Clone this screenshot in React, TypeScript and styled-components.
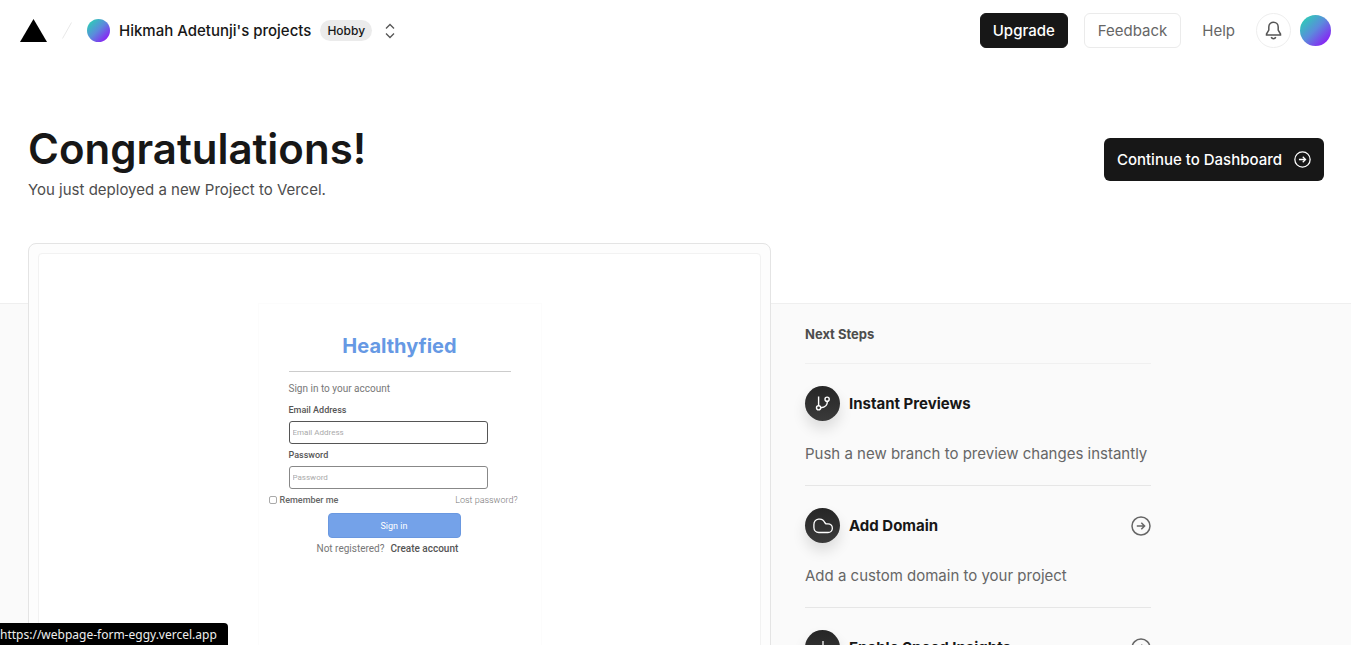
import React from "react";
import styled, { createGlobalStyle, css } from "styled-components";

const GlobalStyle = createGlobalStyle`
  *, *::before, *::after { box-sizing: border-box; }
  body {
    margin: 0;
    background: #fff;
    color: #171717;
    font-family: Inter, "Liberation Sans", sans-serif;
    font-size: 15px;
    line-height: 20px;
  }
  h1, h2, h3, p, ul { margin: 0; padding: 0; }
  a { color: inherit; text-decoration: none; }
  button, input { font: inherit; }
`;

const Page = styled.div`
  display: flex;
  flex-direction: column;
  height: 100vh;
  overflow: hidden;
`;

const Header = styled.header`
  display: flex;
  flex: none;
  align-items: center;
  justify-content: space-between;
  height: 61px;
  padding: 0 20px;
`;

const Cluster = styled.div<{ $gap: number }>`
  display: flex;
  align-items: center;
  gap: ${(p) => p.$gap}px;
`;

const HomeLink = styled.a`
  display: flex;
`;

const Avatar = styled.span<{ $size: number }>`
  flex: none;
  width: ${(p) => p.$size}px;
  height: ${(p) => p.$size}px;
  border-radius: 50%;
  background: linear-gradient(135deg, #2bd0b4 8%, #5b8bdc 48%, #8a1ff5 88%);
`;

const TeamName = styled.a`
  font-weight: 500;
`;

const Pill = styled.span`
  padding: 0 7px;
  border-radius: 11px;
  background: #ebebeb;
  font-size: 12px;
  font-weight: 500;
  line-height: 21px;
`;

const IconButton = styled.button<{ $round?: boolean }>`
  display: flex;
  align-items: center;
  justify-content: center;
  padding: 0;
  border: 0;
  background: none;
  color: #555;
  ${(p) =>
    p.$round &&
    css`
      width: 35px;
      height: 35px;
      border: 1px solid #eee;
      border-radius: 50%;
    `}
`;

const Button = styled.button<{ $dark?: boolean }>`
  height: 35px;
  padding: 0 ${(p) => (p.$dark ? 12 : 13)}px;
  border: 1px solid ${(p) => (p.$dark ? "#171717" : "#ebebeb")};
  border-radius: 6px;
  background: ${(p) => (p.$dark ? "#171717" : "#fff")};
  color: ${(p) => (p.$dark ? "#fff" : "#666")};
  font-weight: ${(p) => (p.$dark ? 500 : 400)};
`;

const HelpLink = styled.a`
  padding: 0 5px;
  color: #666;
`;

const Intro = styled.section`
  display: flex;
  flex: none;
  align-items: flex-start;
  justify-content: space-between;
  height: 242px;
  padding: 64px 27px 0 28px;
`;

const Title = styled.h1`
  font-size: 42px;
  font-weight: 600;
  line-height: 48px;
`;

const Subtitle = styled.p`
  margin-top: 7px;
  color: #4d4d4d;
`;

const ContinueLink = styled.a`
  display: flex;
  align-items: center;
  gap: 12px;
  height: 43px;
  margin-top: 13px;
  padding: 0 13px;
  border-radius: 6px;
  background: #171717;
  color: #fff;
  font-weight: 500;
`;

const Band = styled.section`
  display: grid;
  flex: none;
  grid-template-columns: minmax(0, 1fr) 519px;
  gap: 34px;
  padding: 0 27px 0 28px;
  border-top: 1px solid #efefef;
  background: #fafafa;
`;

const PreviewCard = styled.div`
  margin-top: -61px;
  padding: 9px;
  border: 1px solid #e4e4e4;
  border-radius: 8px;
  background: #fdfdfd;
`;

const PreviewScreen = styled.div`
  min-height: 480px;
  padding-top: 49px;
  border: 1px solid #f2f2f2;
  border-radius: 4px;
  background: #fff;
  font-family: Roboto, sans-serif;
  font-size: 10px;
  line-height: 12px;
`;

const SignInForm = styled.form`
  width: 284px;
  min-height: 360px;
  margin: 0 auto;
  padding-top: 28px;
  border: 1px solid #fcfcfc;
  color: #777;
`;

const Brand = styled.h2`
  margin: 0 30px;
  padding-bottom: 11px;
  border-bottom: 1px solid #ccc;
  color: #6699e4;
  font-family: Inter, sans-serif;
  font-size: 20px;
  font-weight: 700;
  line-height: 28px;
  text-align: center;
`;

const Fields = styled.div`
  display: flex;
  flex-direction: column;
  padding: 11px 53px 0 30px;
`;

const FieldLabel = styled.label`
  margin-top: 9px;
  color: #555;
  font-size: 9px;
  font-weight: 500;
`;

const FieldInput = styled.input<{ $active?: boolean }>`
  height: 23px;
  margin-top: 5px;
  margin-bottom: -4px;
  padding: 0 3px;
  border: 1px solid ${(p) => (p.$active ? "#555" : "#888")};
  border-radius: 3px;
  background: #fff;
  font-size: 8px;
  &::placeholder { color: #aaa; opacity: 1; }
`;

const OptionsRow = styled.div`
  display: flex;
  align-items: center;
  justify-content: space-between;
  margin-top: 9px;
  padding: 0 23px 0 10px;
  font-size: 9px;
`;

const Remember = styled.label`
  display: flex;
  align-items: center;
  gap: 3px;
  color: #666;
  font-weight: 500;
`;

const LostLink = styled.a`
  font-weight: 300;
`;

const TickBox = styled.input`
  appearance: none;
  width: 8px;
  height: 8px;
  margin: 0;
  border: 1px solid #aaa;
  border-radius: 2px;
`;

const SubmitButton = styled.button`
  display: block;
  width: 133px;
  height: 25px;
  margin: 7px 0 5px 69px;
  padding: 0;
  border: 1px solid #6a98e0;
  border-radius: 4px;
  background: #74a2e9;
  color: #fff;
  font-size: 9px;
`;

const RegisterLine = styled.p`
  display: flex;
  gap: 6px;
  padding-left: 58px;
  a { color: #555; font-weight: 500; }
`;

const NextSteps = styled.aside`
  max-width: 346px;
  padding-top: 20px;
`;

const StepsHeading = styled.h2`
  padding-bottom: 19px;
  color: #4d4d4d;
  font-size: 13px;
  font-weight: 700;
  line-height: 20px;
`;

const StepList = styled.ul`
  list-style: none;
`;

const Step = styled.li`
  height: 122px;
  padding-top: 22px;
  border-top: 1px solid #e6e6e6;
  &:first-child { border-color: #f0f0f0; }
`;

const StepHead = styled.div`
  display: flex;
  align-items: center;
  gap: 9px;
  color: #666;
`;

const StepBadge = styled.span`
  display: flex;
  align-items: center;
  justify-content: center;
  width: 35px;
  height: 35px;
  border-radius: 50%;
  background: linear-gradient(#262626, #3a3a3a);
  box-shadow: 0 8px 14px rgba(0, 0, 0, 0.12);
  color: #fff;
`;

const StepName = styled.h3`
  flex: 1;
  color: #171717;
  font-size: 15px;
  font-weight: 700;
`;

const StepText = styled.p`
  margin-top: 23px;
  color: #666;
`;

const StepLink = styled.a`
  display: flex;
`;

const StatusBar = styled.div`
  position: fixed;
  bottom: 0;
  left: 0;
  height: 22px;
  padding-right: 11px;
  border-radius: 0 4px 0 0;
  background: #000;
  color: #eee;
  font-family: "Noto Sans", sans-serif;
  font-size: 12px;
  line-height: 24px;
`;

const CircleArrow = ({ size }: { size: number }) => (
  <svg width={size} height={size} viewBox="0 0 20 20" fill="none" stroke="currentColor" strokeWidth="1.5">
    <circle cx="10" cy="10" r="9" />
    <path d="M5.8 10h7.6M10.3 6.7l3.3 3.3-3.3 3.3" />
  </svg>
);

const BranchIcon = () => (
  <svg width="17" height="17" viewBox="0 0 17 17" fill="none" stroke="currentColor" strokeWidth="1.4">
    <path d="M4.6 1.6v9.1M13.4 6.3c0 3.9-2.4 6.2-6.6 6.5" />
    <circle cx="4.6" cy="12.8" r="2.1" />
    <circle cx="13.1" cy="4.2" r="2.1" />
  </svg>
);

const CloudIcon = () => (
  <svg width="20" height="16" viewBox="0 0 20 16" fill="none" stroke="currentColor" strokeWidth="1.3">
    <path d="M5.8 14.5a5 5 0 0 1-4.9-5V6.6a5.6 5.6 0 0 1 10.8-2 4.2 4.2 0 0 1 1.2 1.2h2.1a4.35 4.35 0 0 1 0 8.7z" />
  </svg>
);

const SpeedIcon = () => (
  <svg width="18" height="18" viewBox="0 0 18 18" fill="none" stroke="currentColor" strokeWidth="1.3">
    <path d="M9 2v14" />
  </svg>
);

const BellIcon = () => (
  <svg width="17" height="19" viewBox="0 0 17 19" fill="none" stroke="currentColor" strokeWidth="1.5">
    <path d="M8.5 1.2a4.7 4.7 0 0 0-4.7 4.7v3.2L1.5 13v.9h14V13l-2.3-3.9V5.9a4.7 4.7 0 0 0-4.7-4.7z" />
    <path d="M6.2 16.2c.5 1 1.3 1.5 2.3 1.5s1.8-.5 2.3-1.5" />
  </svg>
);

const steps = [
  { name: "Instant Previews", text: "Push a new branch to preview changes instantly", icon: <BranchIcon />, link: false },
  { name: "Add Domain", text: "Add a custom domain to your project", icon: <CloudIcon />, link: true },
  { name: "Enable Speed Insights", text: "", icon: <SpeedIcon />, link: true },
];

export default function App() {
  return (
    <Page>
      <GlobalStyle />
      <Header>
        <Cluster $gap={9}>
          <Cluster $gap={15}>
            <HomeLink href="#" aria-label="Home">
              <svg width="27" height="23" viewBox="0 0 27 23">
                <path d="M13.5 0L27 23H0z" fill="#000" />
              </svg>
            </HomeLink>
            <svg width="10" height="17" viewBox="0 0 10 17" fill="none" stroke="#e8e8e8">
              <path d="M9.5.5l-9 16" />
            </svg>
            <Avatar $size={23} />
          </Cluster>
          <TeamName href="#">Hikmah Adetunji's projects</TeamName>
          <Pill>Hobby</Pill>
          <IconButton aria-label="Switch team">
            <svg width="18" height="16" viewBox="0 0 18 16" fill="none" stroke="currentColor" strokeWidth="1.3">
              <path d="M5 5.5L9 1.5l4 4M5 10.5l4 4 4-4" />
            </svg>
          </IconButton>
        </Cluster>
        <Cluster $gap={16}>
          <Button $dark>Upgrade</Button>
          <Button>Feedback</Button>
          <HelpLink href="#">Help</HelpLink>
          <Cluster $gap={9}>
            <IconButton $round aria-label="Notifications">
              <BellIcon />
            </IconButton>
            <Avatar $size={31} />
          </Cluster>
        </Cluster>
      </Header>

      <Intro>
        <div>
          <Title>Congratulations!</Title>
          <Subtitle>You just deployed a new Project to Vercel.</Subtitle>
        </div>
        <ContinueLink href="#">
          Continue to Dashboard
          <CircleArrow size={17} />
        </ContinueLink>
      </Intro>

      <Band>
        <PreviewCard>
          <PreviewScreen>
            <SignInForm>
              <Brand>Healthyfied</Brand>
              <Fields>
                <p>Sign in to your account</p>
                <FieldLabel htmlFor="email">Email Address</FieldLabel>
                <FieldInput id="email" type="email" placeholder="Email Address" $active />
                <FieldLabel htmlFor="password">Password</FieldLabel>
                <FieldInput id="password" type="password" placeholder="Password" />
              </Fields>
              <OptionsRow>
                <Remember>
                  <TickBox type="checkbox" />
                  Remember me
                </Remember>
                <LostLink href="#">Lost password?</LostLink>
              </OptionsRow>
              <SubmitButton type="button">Sign in</SubmitButton>
              <RegisterLine>
                Not registered? <a href="#">Create account</a>
              </RegisterLine>
            </SignInForm>
          </PreviewScreen>
        </PreviewCard>

        <NextSteps>
          <StepsHeading>Next Steps</StepsHeading>
          <StepList>
            {steps.map((step) => (
              <Step key={step.name}>
                <StepHead>
                  <StepBadge>{step.icon}</StepBadge>
                  <StepName>{step.name}</StepName>
                  {step.link && (
                    <StepLink href="#" aria-label={step.name}>
                      <CircleArrow size={20} />
                    </StepLink>
                  )}
                </StepHead>
                {step.text && <StepText>{step.text}</StepText>}
              </Step>
            ))}
          </StepList>
        </NextSteps>
      </Band>

      <StatusBar>https://webpage-form-eggy.vercel.app</StatusBar>
    </Page>
  );
}
